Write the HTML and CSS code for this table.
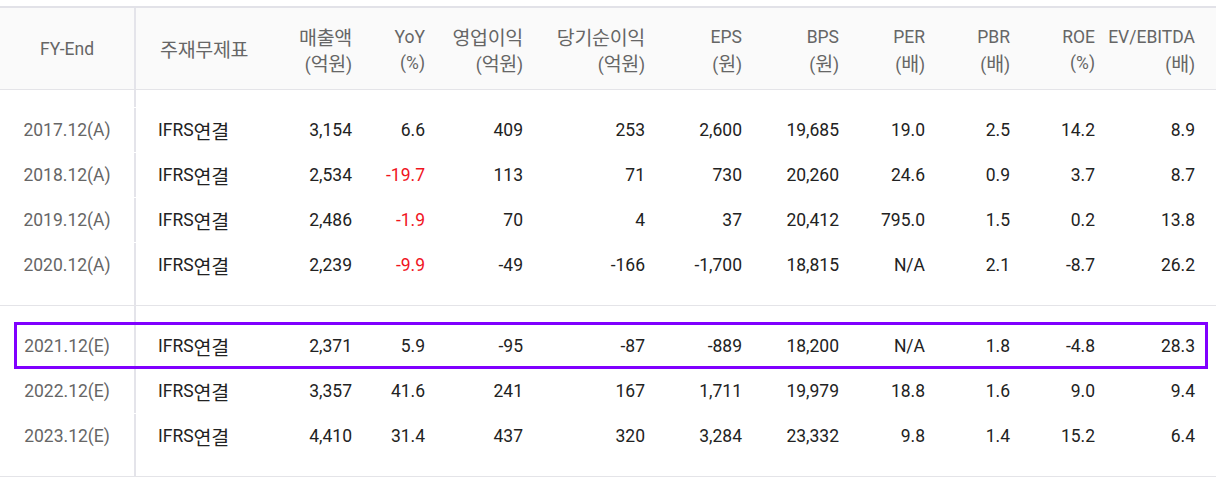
FILE: index.html
```html
<!DOCTYPE html>
<html lang="ko">
<head>
<meta charset="utf-8">
<link rel="stylesheet" href="styles.css">
</head>
<body>
<div class="table">
  <div class="row head">
    <div class="c c0">FY-End</div>
    <div class="c c1"><span class="ko">주재무제표</span></div>
    <div class="c n"><span class="ko">매출액</span><span>(<span class="ko">억원</span>)</span></div>
    <div class="c n"><span>YoY</span><span>(%)</span></div>
    <div class="c n"><span class="ko">영업이익</span><span>(<span class="ko">억원</span>)</span></div>
    <div class="c n"><span class="ko">당기순이익</span><span>(<span class="ko">억원</span>)</span></div>
    <div class="c n"><span>EPS</span><span>(<span class="ko">원</span>)</span></div>
    <div class="c n"><span>BPS</span><span>(<span class="ko">원</span>)</span></div>
    <div class="c n"><span>PER</span><span>(<span class="ko">배</span>)</span></div>
    <div class="c n"><span>PBR</span><span>(<span class="ko">배</span>)</span></div>
    <div class="c n"><span>ROE</span><span>(%)</span></div>
    <div class="c n last"><span>EV/EBITDA</span><span>(<span class="ko">배</span>)</span></div>
  </div>

  <div class="group">
    <div class="row spacer top"><div class="c c0"></div></div>
    <div class="row body">
      <div class="c c0">2017.12(A)</div><div class="c c1">IFRS<span class="ko">연결</span></div>
      <div class="c n">3,154</div><div class="c n">6.6</div><div class="c n">409</div><div class="c n">253</div>
      <div class="c n">2,600</div><div class="c n">19,685</div><div class="c n">19.0</div><div class="c n">2.5</div>
      <div class="c n">14.2</div><div class="c n last">8.9</div>
    </div>
    <div class="row body">
      <div class="c c0">2018.12(A)</div><div class="c c1">IFRS<span class="ko">연결</span></div>
      <div class="c n">2,534</div><div class="c n neg">-19.7</div><div class="c n">113</div><div class="c n">71</div>
      <div class="c n">730</div><div class="c n">20,260</div><div class="c n">24.6</div><div class="c n">0.9</div>
      <div class="c n">3.7</div><div class="c n last">8.7</div>
    </div>
    <div class="row body">
      <div class="c c0">2019.12(A)</div><div class="c c1">IFRS<span class="ko">연결</span></div>
      <div class="c n">2,486</div><div class="c n neg">-1.9</div><div class="c n">70</div><div class="c n">4</div>
      <div class="c n">37</div><div class="c n">20,412</div><div class="c n">795.0</div><div class="c n">1.5</div>
      <div class="c n">0.2</div><div class="c n last">13.8</div>
    </div>
    <div class="row body">
      <div class="c c0">2020.12(A)</div><div class="c c1">IFRS<span class="ko">연결</span></div>
      <div class="c n">2,239</div><div class="c n neg">-9.9</div><div class="c n">-49</div><div class="c n">-166</div>
      <div class="c n">-1,700</div><div class="c n">18,815</div><div class="c n">N/A</div><div class="c n">2.1</div>
      <div class="c n">-8.7</div><div class="c n last">26.2</div>
    </div>
    <div class="row spacer bottom"><div class="c c0"></div></div>
  </div>

  <div class="group">
    <div class="row spacer top"><div class="c c0"></div></div>
    <div class="row body highlight">
      <div class="c c0">2021.12(E)</div><div class="c c1">IFRS<span class="ko">연결</span></div>
      <div class="c n">2,371</div><div class="c n">5.9</div><div class="c n">-95</div><div class="c n">-87</div>
      <div class="c n">-889</div><div class="c n">18,200</div><div class="c n">N/A</div><div class="c n">1.8</div>
      <div class="c n">-4.8</div><div class="c n last">28.3</div>
    </div>
    <div class="row body">
      <div class="c c0">2022.12(E)</div><div class="c c1">IFRS<span class="ko">연결</span></div>
      <div class="c n">3,357</div><div class="c n">41.6</div><div class="c n">241</div><div class="c n">167</div>
      <div class="c n">1,711</div><div class="c n">19,979</div><div class="c n">18.8</div><div class="c n">1.6</div>
      <div class="c n">9.0</div><div class="c n last">9.4</div>
    </div>
    <div class="row body">
      <div class="c c0">2023.12(E)</div><div class="c c1">IFRS<span class="ko">연결</span></div>
      <div class="c n">4,410</div><div class="c n">31.4</div><div class="c n">437</div><div class="c n">320</div>
      <div class="c n">3,284</div><div class="c n">23,332</div><div class="c n">9.8</div><div class="c n">1.4</div>
      <div class="c n">15.2</div><div class="c n last">6.4</div>
    </div>
    <div class="row spacer bottom"><div class="c c0"></div></div>
  </div>
</div>
</body>
</html>
```

FILE: styles.css
```css
html, body {
  margin: 0;
  padding: 0;
  background: #ffffff;
}

body {
  font-family: "Roboto", "Noto Sans CJK KR", sans-serif;
  font-size: 17.5px;
  color: #222;
}

.ko {
  font-family: "Noto Sans CJK KR", sans-serif;
  font-size: 19.5px;
  letter-spacing: -0.3px;
}

.table {
  margin-top: 6px;
  width: 1216px;
  border-top: 2px solid #e2e2e8;
}

.row {
  display: grid;
  grid-template-columns: 136px 146px 80px 73px 98px 122px 97px 97px 86px 85px 85px 111px;
  position: relative;
}

.c {
  display: flex;
  align-items: center;
  white-space: nowrap;
}

.c0 {
  justify-content: center;
  border-right: 2px solid #e4e4ea;
  color: #666;
}

.c1 {
  padding-left: 22px;
}

.n {
  justify-content: flex-end;
  padding-right: 10px;
  text-align: right;
}

.n.last {
  padding-right: 21px;
}

.head {
  height: 81px;
  background: #fafafa;
  border-bottom: 1px solid #e4e4e8;
  color: #666;
}

.head .c1 {
  padding-left: 24px;
}

.head .n {
  flex-direction: column;
  align-items: flex-end;
  justify-content: center;
  padding-top: 2px;
}

.head .n > span {
  display: block;
  height: 26px;
  line-height: 26px;
}

.group {
  border-bottom: 1px solid #e4e4e8;
}

.spacer.top {
  height: 17px;
}

.spacer.bottom {
  height: 18px;
}

.body {
  height: 45px;
  color: #222;
  padding-top: 1px;
  box-sizing: border-box;
}

.body .c1 {
  color: #222;
}

.neg {
  color: #f0141e;
}

.highlight::after {
  content: "";
  position: absolute;
  left: 14px;
  right: 8px;
  top: -1px;
  bottom: -1px;
  border: 3px solid #8000ff;
  pointer-events: none;
}
```
